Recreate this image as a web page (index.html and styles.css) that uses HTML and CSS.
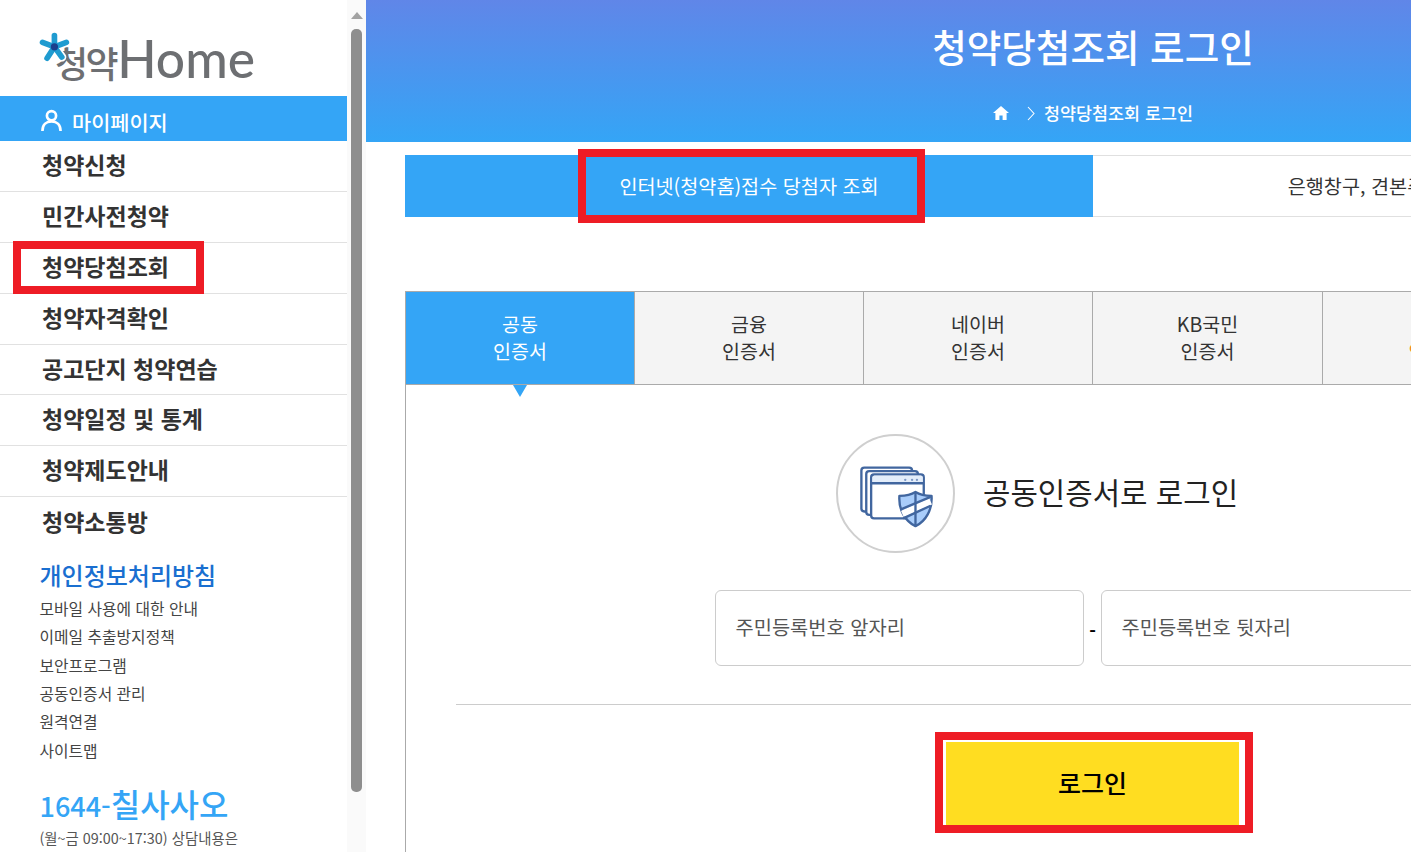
FILE: index.html
```html
<!DOCTYPE html>
<html lang="ko">
<head>
<meta charset="utf-8">
<title>청약당첨조회 로그인</title>
<link rel="stylesheet" href="styles.css">
</head>
<body>
<div class="page">
  <aside class="sidebar">
    <div class="logo">
      <span class="logo-ko">청약</span><span class="logo-en">Home</span>
      <svg class="logo-star" viewBox="0 0 30 30" aria-hidden="true">
        <g stroke="#fff" stroke-width="8" stroke-linecap="round">
          <path d="M14.500 14 V4"/><path d="M14.500 14 L25 10"/><path d="M14.500 14 L21 23"/>
        </g>
        <g stroke="#1f9bd0" stroke-width="5" stroke-linecap="round">
          <path d="M14.500 14 V4"/>
          <path d="M14.500 14 L4 10"/>
          <path d="M14.500 14 L25 10"/>
          <path d="M14.500 14 L8 24"/>
          <path d="M14.500 14 L21 23"/>
        </g>
        <circle cx="14.500" cy="14" r="3.200" fill="#1c3f8c"/>
      </svg>
    </div>
    <a class="mypage">
      <svg class="person" viewBox="0 0 22 24" aria-hidden="true"><circle cx="11" cy="7" r="4.800" fill="none" stroke="#fff" stroke-width="2.800"/><path d="M1.500 23 C1.500 16 6 13 11 13 S20.500 16 20.500 23" fill="none" stroke="#fff" stroke-width="2.800"/></svg>
      <span>마이페이지</span>
    </a>
    <nav class="nav">
      <a class="nav-item">청약신청</a>
      <a class="nav-item">민간사전청약</a>
      <a class="nav-item">청약당첨조회</a>
      <a class="nav-item">청약자격확인</a>
      <a class="nav-item">공고단지 청약연습</a>
      <a class="nav-item">청약일정 및 통계</a>
      <a class="nav-item">청약제도안내</a>
      <a class="nav-item">청약소통방</a>
    </nav>
    <div class="side-foot">
      <div class="privacy">개인정보처리방침</div>
      <ul class="links">
        <li>모바일 사용에 대한 안내</li>
        <li>이메일 추출방지정책</li>
        <li>보안프로그램</li>
        <li>공동인증서 관리</li>
        <li>원격연결</li>
        <li>사이트맵</li>
      </ul>
      <div class="phone"><span class="phone-num">1644-</span><span class="phone-ko">칠사사오</span></div>
      <div class="hours">(월~금 09:00~17:30) 상담내용은</div>
    </div>
    <div class="mark mark-nav"></div>
  </aside>
  <div class="scrollbar">
    <div class="scroll-up"></div>
    <div class="scroll-thumb"></div>
  </div>
  <main class="main">
    <header class="hero">
      <h1 class="hero-title">청약당첨조회 로그인</h1>
      <div class="crumbs">
        <svg class="crumb-home" viewBox="0 0 16 14" aria-hidden="true"><path d="M8 0 L16 7 H13.600 V14 H9.600 V9.400 H6.400 V14 H2.400 V7 H0 Z" fill="#fff"/></svg>
        <svg class="crumb-sep" viewBox="0 0 8 15" aria-hidden="true"><path d="M1 1 L7 7.500 L1 14" fill="none" stroke="#fff" stroke-width="1.100"/></svg>
        <span class="crumb-text">청약당첨조회 로그인</span>
      </div>
    </header>
    <section class="content">
      <div class="channel-tabs">
        <div class="channel on">인터넷(청약홈)접수 당첨자 조회</div>
        <div class="channel">은행창구, 견본주택 접수 당첨자 조회</div>
        <div class="mark mark-tab"></div>
      </div>
      <div class="cert-tabs">
        <div class="cert on">공동<br>인증서</div>
        <div class="cert">금융<br>인증서</div>
        <div class="cert">네이버<br>인증서</div>
        <div class="cert cert-wide">KB국민<br>인증서</div>
        <div class="cert cert-orange">토스<br><span>인증서</span></div>
        <div class="cert">카카오<br>인증서</div>
      </div>
      <div class="panel">
        <div class="login-head">
          <div class="icon-ring">
            <svg viewBox="0 0 118 118" width="118" height="118" aria-hidden="true">
              <g fill="#fff" stroke="#41669f" stroke-width="2.400" stroke-linejoin="round">
                <rect x="24" y="32" width="52" height="45" rx="3"/>
                <rect x="29" y="35.500" width="53" height="45" rx="3"/>
                <rect x="34" y="39" width="54" height="45" rx="3"/>
              </g>
              <path d="M35.500 47 V42 a2 2 0 0 1 2 -2 H85 a2 2 0 0 1 2 2 V47 Z" fill="#e3edfa"/>
              <path d="M34 48 H88" stroke="#41669f" stroke-width="2.400"/>
              <g fill="#7c97c4"><circle cx="69" cy="44.500" r="1.200"/><circle cx="76" cy="44.500" r="1.200"/><circle cx="81" cy="44.500" r="1.200"/></g>
              <path d="M63 61 C69 61 75 60 79.500 57 C84 60 90 61 96 61 C97 75 90 87 79.500 92 C69 87 62 75 63 61 Z" fill="#a9cdfb" stroke="#41669f" stroke-width="2.400" stroke-linejoin="round"/>
              <path d="M66 79.500 L95 66.500" stroke="#fff" stroke-width="7"/>
              <path d="M64 75 L95 62 M67 84 L95 71" stroke="#41669f" stroke-width="2.400"/>
              <path d="M79.500 57 V92" stroke="#41669f" stroke-width="2.400"/>
            </svg>
          </div>
          <h2 class="login-title">공동인증서로 로그인</h2>
        </div>
        <div class="id-row">
          <div class="id-input">주민등록번호 앞자리</div>
          <span class="dash">-</span>
          <div class="id-input">주민등록번호 뒷자리</div>
        </div>
        <hr class="rule">
        <div class="login-wrap">
          <button class="login-btn" type="button">로그인</button>
          <div class="mark mark-btn"></div>
        </div>
      </div>
    </section>
  </main>
</div>
</body>
</html>
```
FILE: styles.css
```css
* { box-sizing: border-box; }
html, body { margin: 0; height: 100%; overflow: hidden; background: #fff; }
body { font-family: "Noto Sans CJK KR", "Noto Sans", sans-serif; color: #333; }
a { color: inherit; text-decoration: none; }
.page { display: flex; width: 1411px; height: 852px; overflow: hidden; }

/* sidebar */
.sidebar { position: relative; flex: 0 0 347px; width: 347px; height: 852px; overflow: hidden; }
.logo { position: relative; display: flex; align-items: baseline; height: 96px; padding: 28px 0 0 55px; color: #6d6f72; line-height: 60px; }
.logo-star { position: absolute; left: 38px; top: 31px; width: 34px; height: 34px; }
.logo-ko { font-size: 36px; font-weight: 500; letter-spacing: -2.500px; }
.logo-en { font-family: Lato, sans-serif; font-size: 51.500px; font-weight: 500; margin-left: 1px; }
.mypage { display: flex; align-items: center; height: 45px; padding: 7px 0 0 41px; background: #34a5f6; color: #fff; font-size: 20.800px; font-weight: 500; }
.person { width: 21px; height: 23px; margin: -3px 10px 0 0; }
.nav-item { display: flex; align-items: center; height: 50.900px; padding: 0 0 4px 42px; font-size: 23px; font-weight: 700; color: #333; border-bottom: 1px solid #e1e1e1; }
.nav-item:last-child { border-bottom: 0; }
.side-foot { padding: 9px 0 0 39.500px; }
.privacy { font-size: 24px; font-weight: 500; line-height: 36px; color: #1a6fd0; }
.links { list-style: none; margin: 2px 0 0; padding: 0; font-size: 15.800px; line-height: 28.300px; color: #444; }
.phone { display: flex; align-items: baseline; margin-top: 15px; line-height: 46px; color: #34a5f6; font-weight: 500; }
.phone-num { font-size: 27px; }
.phone-ko { font-size: 32px; }
.hours { font-size: 14.400px; line-height: 18px; color: #555; }

/* fake scrollbar */
.scrollbar { flex: 0 0 19px; display: flex; flex-direction: column; align-items: center; height: 852px; padding: 12px 0 0; background: #fafafa; }
.scroll-up { width: 0; height: 0; border-left: 6.500px solid transparent; border-right: 6.500px solid transparent; border-bottom: 7px solid #a3a3a3; }
.scroll-thumb { width: 11px; height: 763px; margin-top: 10px; border-radius: 5px; background: #8e8e8e; }

/* main */
.main { flex: 0 0 1454px; width: 1454px; }
.hero { height: 142px; display: flex; flex-direction: column; align-items: center; color: #fff; background: linear-gradient(180deg, #6086e8 0%, #34a5f6 100%); }
.hero-title { margin: 21px 0 0; font-size: 37.600px; font-weight: 500; line-height: 50px; }
.crumbs { display: flex; align-items: center; margin-top: 29px; font-size: 17.400px; font-weight: 500; line-height: 26px; }
.crumb-home { width: 16px; height: 14px; margin-right: 18px; }
.crumb-sep { width: 8px; height: 15px; margin-right: 9px; }
.content { padding: 13px 39px 0; }
.channel-tabs { position: relative; display: flex; height: 62px; }
.channel { flex: 1 1 50%; display: flex; align-items: center; justify-content: center; padding-bottom: 2px; font-size: 19.650px; color: #333; border-top: 1px solid #e0e0e0; border-bottom: 1px solid #e0e0e0; }
.channel.on { background: #34a5f6; color: #fff; border: 0; }
.cert-tabs { display: flex; height: 94px; margin-top: 74px; border-top: 1px solid #aaa; border-bottom: 1px solid #aaa; border-left: 1px solid #aaa; }
.cert { flex: 0 0 229px; display: block; text-align: center; padding-top: 18px; font-size: 19.500px; line-height: 27px; color: #333; background: #f4f4f4; border-right: 1px solid #aaa; }
.cert-wide { flex-basis: 230px; }
.cert.on { position: relative; background: #34a5f6; color: #fff; }
.cert.on::after { content: ""; position: absolute; left: 107px; bottom: -13px; width: 0; height: 0; border-left: 7px solid transparent; border-right: 7px solid transparent; border-top: 12px solid #34a5f6; }
.cert-orange span { color: #f58a1f; padding-right: 3px; }
.panel { height: 470px; border-left: 1px solid #aaa; }
.login-head { display: flex; align-items: center; gap: 28px; padding: 49px 0 0 430px; }
.icon-ring { flex: 0 0 119px; width: 119px; height: 119px; border: 2px solid #cfcfcf; border-radius: 50%; display: flex; align-items: center; justify-content: center; background: #fff; }
.login-title { margin: 0 0 6px; font-size: 29.800px; font-weight: 400; color: #222; }
.id-row { display: flex; align-items: center; margin: 37px 0 0 309px; }
.id-input { flex: 0 0 369px; width: 369px; height: 76px; padding: 0 0 4px 19.500px; border: 1px solid #ccc; border-radius: 6px; display: flex; align-items: center; font-size: 19.800px; color: #555; }
.dash { width: 17px; text-align: center; font-size: 18px; font-weight: 700; color: #000; padding-top: 3px; }
.rule { height: 1px; margin: 38px 0 0 50px; border: 0; background: #ccc; }
.login-wrap { position: relative; width: 318px; height: 101px; margin: 27px 0 0 529px; }
.login-btn { position: absolute; left: 11px; top: 10px; width: 293px; height: 83px; padding: 0 0 4px; border: 0; background: #ffdd21; font: 500 25px "Noto Sans CJK KR", sans-serif; color: #000; }

/* red annotation frames that lie over the screenshot */
.mark { position: absolute; border: 8px solid #ee1c25; pointer-events: none; }
.mark-nav { left: 13px; top: 241px; width: 191px; height: 53px; }
.mark-tab { left: 173px; top: -6px; width: 347px; height: 74px; }
.mark-btn { left: 0; top: 0; width: 318px; height: 101px; }
```
